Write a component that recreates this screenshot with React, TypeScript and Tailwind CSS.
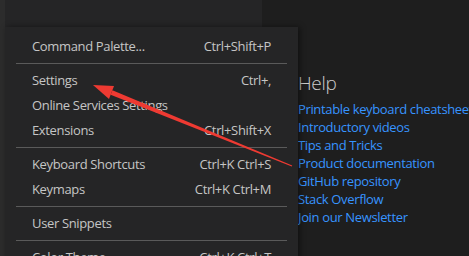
// VS Code 管理菜单 + 欢迎页 Help 区

const MENU: ({ label: string; keys?: string } | "sep")[] = [
    { label: "Command Palette...", keys: "Ctrl+Shift+P" },
    "sep",
    { label: "Settings", keys: "Ctrl+," },
    { label: "Online Services Settings" },
    { label: "Extensions", keys: "Ctrl+Shift+X" },
    "sep",
    { label: "Keyboard Shortcuts", keys: "Ctrl+K Ctrl+S" },
    { label: "Keymaps", keys: "Ctrl+K Ctrl+M" },
    "sep",
    { label: "User Snippets" },
    "sep",
    { label: "Color Theme", keys: "Ctrl+K Ctrl+T" },
];

const LINKS = [
    "Printable keyboard cheatsheet",
    "Introductory videos",
    "Tips and Tricks",
    "Product documentation",
    "GitHub repository",
    "Stack Overflow",
    "Join our Newsletter",
];

const FONT = "font-['Open_Sans','Noto_Sans',sans-serif]";

function Arrow() {
    return (
        <svg className="absolute left-0 top-0 pointer-events-none" width="469" height="256">
            <polygon points="93,85 114,86 109,99" fill="#ee3a32" />
            <polygon points="112.4,90.2 110.6,94.8 291.8,166.5 292.2,165.5" fill="#ee3a32" />
        </svg>
    );
}

export default function App() {
    return (
        <div className={`relative w-[469px] h-[256px] overflow-hidden bg-[#1e1e1e] ${FONT}`}>
            <div className="flex h-full">
                <div className="w-[5px] shrink-0 bg-[#2c2c2c]" />
                <div className="w-[257px] shrink-0 bg-[#252526]" />
                <div className="pl-[36px] pt-[70px] shrink-0">
                    <div className="text-[19px] font-light text-[#cbcbcb] leading-[26px] tracking-[-0.3px]">Help</div>
                    <div className="mt-[4px] flex flex-col">
                        {LINKS.map((l) => (
                            <span
                                key={l}
                                className="text-[13px] leading-[18px] text-[#3794ff] whitespace-nowrap tracking-[-0.35px]"
                            >
                                {l}
                            </span>
                        ))}
                    </div>
                </div>
            </div>

            {/* 菜单浮层 */}
            <div className="absolute left-[5px] top-[27px] w-[293px] h-[240px] bg-[#252526] shadow-[2px_0_6px_rgba(0,0,0,0.45)] pt-[6.5px] px-[11px]">
                {MENU.map((m, i) =>
                    m === "sep" ? (
                        <div key={i} className="h-[9px] flex items-center">
                            <div className="h-px w-full bg-[#5a5a5a]" />
                        </div>
                    ) : (
                        <div
                            key={i}
                            className="h-[25px] pt-[2px] flex items-center justify-between px-[16px] text-[13px] text-[#c5c5c5] tracking-[-0.35px] whitespace-nowrap"
                        >
                            <span>{m.label}</span>
                            {m.keys && <span>{m.keys}</span>}
                        </div>
                    )
                )}
            </div>

            <Arrow />
        </div>
    );
}
